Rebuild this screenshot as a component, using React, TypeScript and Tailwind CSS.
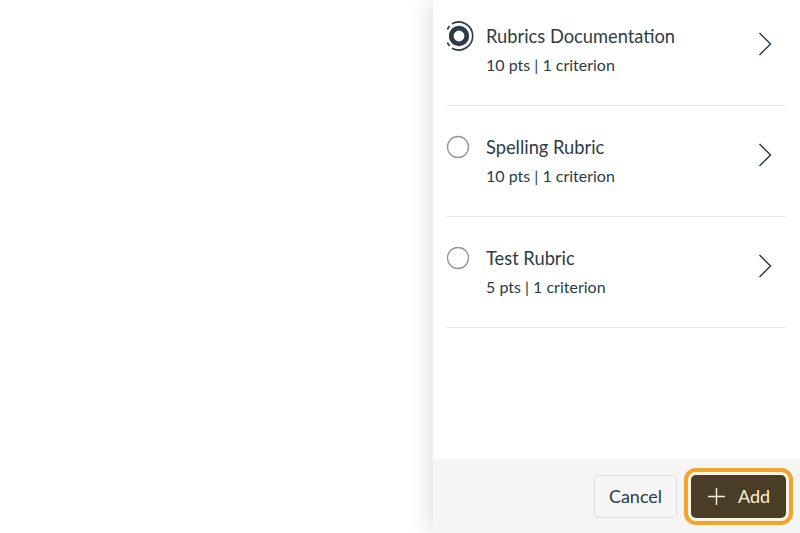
import React from "react";

const rubrics = [
  { title: "Rubrics Documentation", meta: "10 pts | 1 criterion", selected: true },
  { title: "Spelling Rubric", meta: "10 pts | 1 criterion", selected: false },
  { title: "Test Rubric", meta: "5 pts | 1 criterion", selected: false },
];

function Radio({ checked }: { checked: boolean }) {
  if (checked) {
    return (
      <svg width="34" height="34" viewBox="0 0 34 34" className="shrink-0 -m-[5px] translate-x-[1px]">
        <path d="M10 4.7 A14 14 0 1 1 10 29.3" fill="none" stroke="#2d3b45" strokeWidth="1.7" />
        <path d="M5.3 10.5 A14 14 0 0 1 7.6 7.2" fill="none" stroke="#2d3b45" strokeWidth="1.7" />
        <path d="M5.3 23.5 A14 14 0 0 0 7.6 26.8" fill="none" stroke="#2d3b45" strokeWidth="1.7" />
        <circle cx="17" cy="17" r="7.8" fill="none" stroke="#2d3b45" strokeWidth="4.8" />
      </svg>
    );
  }
  return (
    <svg width="24" height="24" viewBox="0 0 24 24" className="shrink-0">
      <circle cx="12" cy="12" r="10.5" fill="#fff" stroke="#8f979d" strokeWidth="1.3" />
    </svg>
  );
}

function Chevron() {
  return (
    <svg width="24" height="24" viewBox="0 0 24 24" className="shrink-0 mt-[8px]">
      <path d="M6.5 1 L17.5 12 L6.5 23" fill="none" stroke="#2d3b45" strokeWidth="1.5" />
    </svg>
  );
}

export default function App() {
  return (
    <div
      className="w-[800px] h-[533px] flex bg-white overflow-hidden text-[#2d3b45]"
      style={{ fontFamily: "Lato, 'Open Sans', sans-serif" }}
    >
      <div className="flex-1 bg-white" />
      <div className="w-[367px] h-full flex flex-col bg-white shadow-[-6px_0_18px_rgba(0,0,0,0.10)] relative">
        <div className="flex-1 overflow-hidden px-[13px] pr-[14px]">
          <div className="-mt-[5px]">
            {rubrics.map((r) => (
              <div key={r.title} className="h-[111px] border-b border-[#e6e9eb] flex items-start pt-[29px]">
                <div className="w-[24px] flex justify-center">
                  <Radio checked={r.selected} />
                </div>
                <div className="flex-1 ml-[16px]">
                  <div className="text-[18.3px] leading-[24px]">{r.title}</div>
                  <div className="text-[16px] leading-[20px] mt-[7px]">{r.meta}</div>
                </div>
                <div className="mr-[9px]">
                  <Chevron />
                </div>
              </div>
            ))}
          </div>
        </div>
        <div className="h-[74px] bg-[#f5f5f5] flex items-center justify-end gap-[14px] pr-[14px]">
          <button className="h-[43px] w-[83px] rounded-[4px] border border-[#dadde0] bg-[#f5f5f5] text-[18px] text-[#2d3b45]">
            Cancel
          </button>
          <button className="h-[43px] w-[95px] rounded-[5px] bg-[#4a3d26] text-[#f6f0dc] text-[18px] flex items-center justify-center gap-[12px] ring-[4px] ring-[#f2a52a] ring-offset-[3px] ring-offset-[#fbf3e4]">
            <svg width="19" height="19" viewBox="0 0 19 19">
              <path d="M9.5 1 V18 M1 9.5 H18" stroke="#f6f0dc" strokeWidth="1.4" />
            </svg>
            <span>Add</span>
          </button>
        </div>
      </div>
    </div>
  );
}
